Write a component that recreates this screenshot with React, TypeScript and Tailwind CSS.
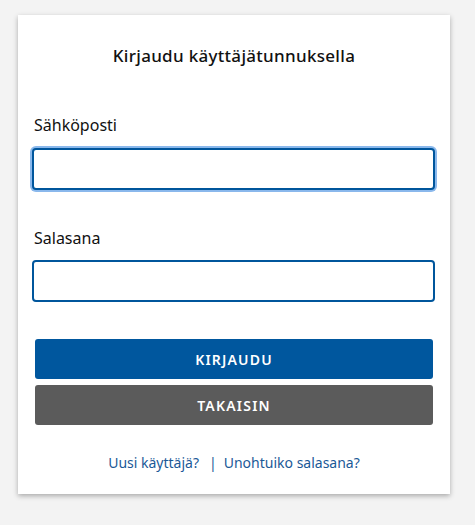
export default function App() {
  return (
    <div className="min-h-[525px] w-[475px] bg-[#f3f3f3] pt-[15px] font-['Noto_Sans',sans-serif]">
      <div className="ml-[18px] w-[432px] bg-white px-[14px] pb-[21px] pt-[29px] shadow-[0_2px_5px_rgba(0,0,0,0.3)]">
        <h1 className="text-center text-[17px] font-medium leading-6 tracking-[0.3px] text-[#111]">
          Kirjaudu käyttäjätunnuksella
        </h1>

        <form className="mt-[45px]" onSubmit={(e) => e.preventDefault()}>
          <label htmlFor="email" className="block pl-[2px] text-[16px] leading-6 text-[#111]">
            Sähköposti
          </label>
          <input
            id="email"
            type="email"
            autoFocus
            className="mt-[11px] block h-[42px] w-[403px] rounded-[4px] border-2 border-[#00569c] bg-white px-[10px] text-[15px] caret-black outline-none shadow-[0_0_0_2px_#8ab8ec]"
          />

          <label htmlFor="password" className="mt-[36px] block pl-[2px] text-[16px] leading-6 text-[#111]">
            Salasana
          </label>
          <input
            id="password"
            type="password"
            className="mt-[10px] block h-[42px] w-[403px] rounded-[4px] border-2 border-[#00569c] bg-white px-[10px] text-[15px] outline-none"
          />

          <div className="mt-[37px] flex flex-col gap-[6px] px-[3px]">
            <button
              type="submit"
              className="h-[40px] rounded-[3px] bg-[#00579e] text-[14px] font-semibold tracking-[1.2px] text-white"
            >
              KIRJAUDU
            </button>
            <button
              type="button"
              className="h-[40px] rounded-[3px] bg-[#5b5b5b] text-[14px] font-semibold tracking-[1.2px] text-white"
            >
              TAKAISIN
            </button>
          </div>
        </form>

        <div className="mt-[28px] flex items-center justify-center text-[14px] leading-5 text-[#1b5997]">
          <a href="#" className="hover:underline">Uusi käyttäjä?</a>
          <span className="ml-[10px] mr-[7px] text-[#1b5997]">|</span>
          <a href="#" className="hover:underline">Unohtuiko salasana?</a>
        </div>
      </div>
    </div>
  )
}
